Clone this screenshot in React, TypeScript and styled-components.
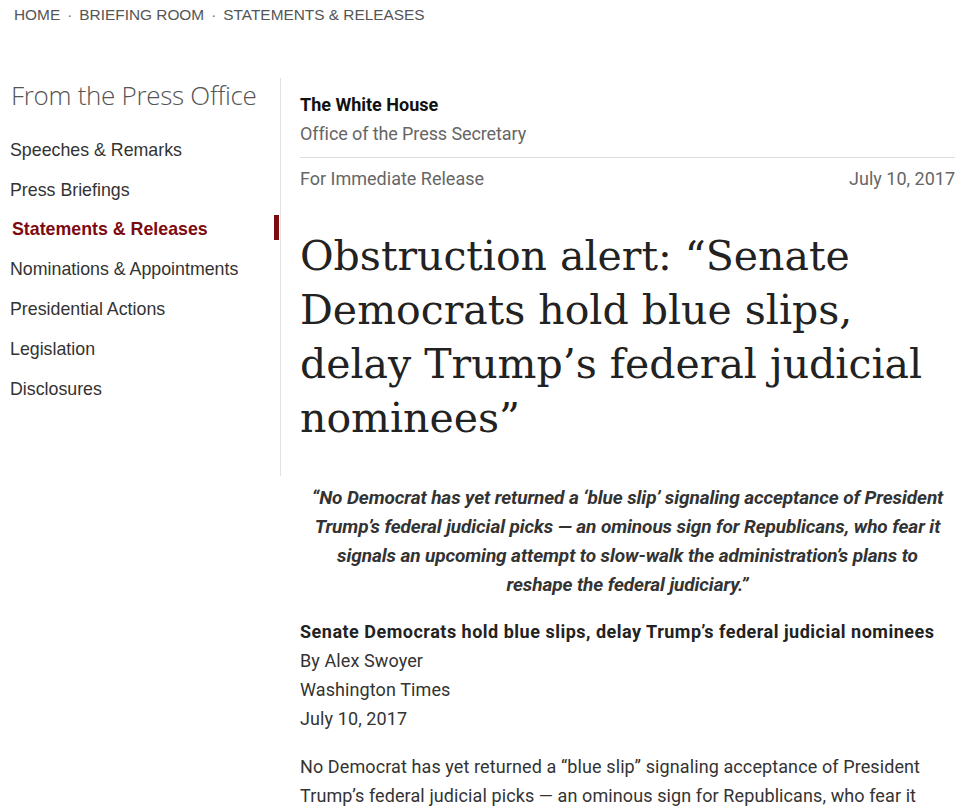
import React from "react";
import styled, { createGlobalStyle } from "styled-components";

const Global = createGlobalStyle`
  html, body { margin: 0; padding: 0; background: #fff; }
  body { width: 980px; overflow: hidden; }
`;

const Page = styled.div`
  width: 980px;
  height: 811px;
  overflow: hidden;
  background: #fff;
`;

const Breadcrumb = styled.nav`
  display: flex;
  gap: 7px;
  padding: 6px 0 0 14px;
  height: 19px;
  font-family: "Liberation Sans", Arial, sans-serif;
  font-size: 15.4px;
  line-height: 18px;
  text-transform: uppercase;
  color: #555;
`;

const Dot = styled.span`
  color: #777;
`;

const Layout = styled.div`
  display: grid;
  grid-template-columns: 281px 1fr;
  margin-top: 53px;
`;

const Sidebar = styled.aside`
  border-right: 1px solid #e2e2e2;
  height: 398px;
`;

const SideTitle = styled.h2`
  margin: 0 0 17.5px 11px;
  font-family: "Open Sans", sans-serif;
  font-weight: 300;
  font-size: 26px;
  line-height: 35px;
  color: #555;
  letter-spacing: -0.3px;
`;

const NavList = styled.ul`
  list-style: none;
  margin: 0;
  padding: 0;
`;

const NavItem = styled.li<{ $active?: boolean }>`
  position: relative;
  height: 39.8px;
  display: flex;
  align-items: center;
  padding-left: ${(p) => (p.$active ? "12px" : "10px")};
  font-family: "Liberation Sans", Arial, sans-serif;
  font-size: 17.8px;
  font-weight: ${(p) => (p.$active ? 700 : 400)};
  color: ${(p) => (p.$active ? "#7c0a0f" : "#333")};
  ${(p) =>
    p.$active &&
    `&::after {
      content: "";
      position: absolute;
      right: 1px;
      top: 5px;
      width: 5px;
      height: 25px;
      background: #7c0a0f;
    }`}
`;

const Main = styled.main`
  padding: 15px 25px 0 19px;
  font-family: "Roboto", sans-serif;
`;

const Org = styled.div`
  font-size: 18px;
  font-weight: 700;
  color: #111;
  line-height: 24px;
`;

const Office = styled.div`
  font-size: 18px;
  color: #666;
  line-height: 24px;
  margin-top: 5px;
  letter-spacing: -0.1px;
`;

const MetaRow = styled.div`
  display: flex;
  justify-content: space-between;
  border-top: 1px solid #ddd;
  margin-top: 11px;
  padding-top: 9px;
  font-size: 18px;
  color: #666;
  line-height: 24px;
`;

const Headline = styled.h1`
  margin: 38px 0 0 0;
  font-family: "DejaVu Serif", Georgia, serif;
  font-weight: 400;
  font-size: 41px;
  line-height: 54px;
  color: #222;
  letter-spacing: 0;
`;

const PullQuote = styled.blockquote`
  margin: 38px 0 0 0;
  padding: 0 6px;
  text-align: center;
  font-style: italic;
  font-weight: 700;
  font-size: 19px;
  line-height: 29px;
  color: #333;
  letter-spacing: -0.1px;
`;

const Source = styled.div`
  margin-top: 18px;
  font-size: 18px;
  line-height: 29px;
  color: #333;
  letter-spacing: 0.1px;
`;

const SourceTitle = styled.div`
  font-weight: 700;
  color: #222;
  letter-spacing: 0.5px;
`;

const Body = styled.p`
  margin: 19px 0 0 0;
  font-size: 18px;
  line-height: 29px;
  color: #333;
  letter-spacing: 0.1px;
`;

const navItems = [
  "Speeches & Remarks",
  "Press Briefings",
  "Statements & Releases",
  "Nominations & Appointments",
  "Presidential Actions",
  "Legislation",
  "Disclosures",
];

export default function App() {
  return (
    <Page>
      <Global />
      <Breadcrumb>
        <span>Home</span>
        <Dot>·</Dot>
        <span>Briefing Room</span>
        <Dot>·</Dot>
        <span>Statements &amp; Releases</span>
      </Breadcrumb>
      <Layout>
        <Sidebar>
          <SideTitle>From the Press Office</SideTitle>
          <NavList>
            {navItems.map((n) => (
              <NavItem key={n} $active={n === "Statements & Releases"}>
                {n}
              </NavItem>
            ))}
          </NavList>
        </Sidebar>
        <Main>
          <Org>The White House</Org>
          <Office>Office of the Press Secretary</Office>
          <MetaRow>
            <span>For Immediate Release</span>
            <span>July 10, 2017</span>
          </MetaRow>
          <Headline>
            Obstruction alert: “Senate Democrats hold blue slips, delay Trump’s federal judicial nominees”
          </Headline>
          <PullQuote>
            “No Democrat has yet returned a ‘blue slip’ signaling acceptance of President Trump’s federal
            judicial picks — an ominous sign for Republicans, who fear it signals an upcoming attempt to
            slow-walk the administration’s plans to reshape the federal judiciary.”
          </PullQuote>
          <Source>
            <SourceTitle>Senate Democrats hold blue slips, delay Trump’s federal judicial nominees</SourceTitle>
            <div>By Alex Swoyer</div>
            <div>Washington Times</div>
            <div>July 10, 2017</div>
          </Source>
          <Body>
            No Democrat has yet returned a “blue slip” signaling acceptance of President Trump’s federal
            judicial picks — an ominous sign for Republicans, who fear it signals an upcoming attempt to
            slow-walk the administration’s plans to reshape the federal judiciary.
          </Body>
        </Main>
      </Layout>
    </Page>
  );
}
